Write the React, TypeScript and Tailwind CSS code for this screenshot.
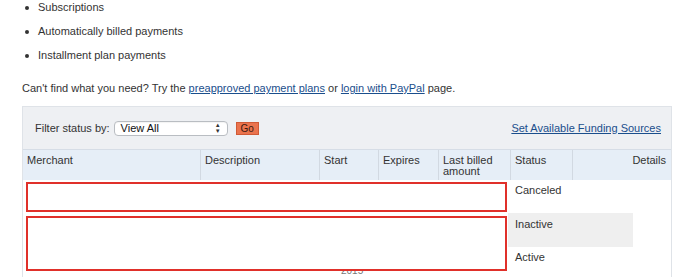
import React from "react";

const cols = [
  { label: "Merchant", w: "w-[178px]" },
  { label: "Description", w: "w-[119px]" },
  { label: "Start", w: "w-[59px]" },
  { label: "Expires", w: "w-[60px]" },
  { label: "Last billed amount", w: "w-[72px]" },
  { label: "Status", w: "w-[62px]" },
];

export default function App() {
  return (
    <div
      className="relative w-[700px] h-[277px] overflow-hidden bg-white text-[#333] text-[11px]"
      style={{ fontFamily: '"Liberation Sans", Arial, sans-serif' }}
    >
      {/* list */}
      <ul className="pl-[38px] pt-[1px] space-y-[11px] leading-[13px]">
        {["Subscriptions", "Automatically billed payments", "Installment plan payments"].map((t) => (
          <li key={t} className="relative">
            <span className="absolute -left-[13px] top-[5px] w-[4px] h-[4px] rounded-full bg-[#333]" />
            {t}
          </li>
        ))}
      </ul>

      <p className="pl-[22px] mt-[20px] leading-[13px]">
        Can't find what you need? Try the{" "}
        <a className="text-[#1a4e8c] underline">preapproved payment plans</a> or{" "}
        <a className="text-[#1a4e8c] underline">login with PayPal</a> page.
      </p>

      {/* table panel */}
      <div className="ml-[22px] mt-[11px] w-[650px] border border-[#dfe3e8] border-b-0">
        <div className="h-[42px] bg-[#eef0f3] flex items-center pl-[12px] pr-[10px]">
          <span>Filter status by:</span>
          <div className="ml-[4px] w-[114px] h-[15px] rounded-[4px] border border-[#b9bdc2] bg-white flex items-center justify-between px-[6px] shadow-[inset_0_1px_1px_rgba(0,0,0,0.05)]">
            <span className="text-[#111]">View All</span>
            <span className="flex flex-col items-center leading-none text-[6px] text-[#333]">
              <span>▲</span>
              <span>▼</span>
            </span>
          </div>
          <div className="ml-[8px] w-[23px] h-[13px] bg-[#ea734d] border border-[#d05a36] flex items-center justify-center text-[10px] text-[#3a1a10]">
            Go
          </div>
          <a className="ml-auto text-[#1a4e8c] underline">Set Available Funding Sources</a>
        </div>

        <div className="flex h-[31px] bg-[#e6eef7] border-t border-[#d6dde6] leading-[11px]">
          {cols.map((c) => (
            <div key={c.label} className={`${c.w} border-r border-[#d2d9e2] px-[4px] pt-[5px]`}>
              {c.label === "Last billed amount" ? (
                <>
                  Last billed
                  <br />
                  amount
                </>
              ) : (
                c.label
              )}
            </div>
          ))}
          <div className="flex-1 px-[5px] pt-[5px] text-right">Details</div>
        </div>

        {/* rows */}
        <div className="relative leading-[13px]">
          <div className="flex h-[33px]">
            <div className="w-[485px]" />
            <div className="w-[125px] pl-[7px] pt-[4px]">Canceled</div>
          </div>
          <div className="flex h-[34px]">
            <div className="w-[485px]" />
            <div className="w-[125px] bg-[#efefef] pl-[7px] pt-[5px]">Inactive</div>
          </div>
          <div className="flex h-[30px]">
            <div className="w-[485px]" />
            <div className="w-[125px] pl-[7px] pt-[4px]">Active</div>
          </div>
          <div className="absolute left-[318px] top-[86px] text-[10px] leading-[10px] text-[#777]">2015</div>

          {/* annotation boxes */}
          <div className="absolute left-[3px] top-[2px] w-[481px] h-[30px] border-2 border-[#e0302a]" />
          <div className="absolute left-[3px] top-[36px] w-[481px] h-[55px] border-2 border-[#e0302a] bg-white" />
        </div>
      </div>
    </div>
  );
}
